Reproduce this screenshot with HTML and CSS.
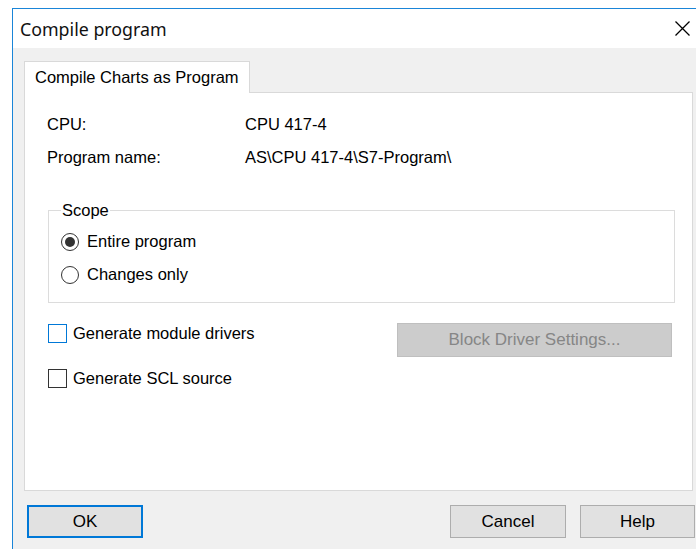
FILE: index.html
```html
<!DOCTYPE html>
<html lang="en">
<head>
<meta charset="utf-8">
<title>Compile program</title>
<link rel="stylesheet" href="styles.css">
</head>
<body>
<div class="window">
  <div class="titlebar">
    <span class="title">Compile program</span>
    <button class="close" aria-label="Close">
      <svg width="15" height="15" viewBox="0 0 15 15"><path d="M0.5 0.5 L14.5 14.5 M14.5 0.5 L0.5 14.5" stroke="#000" stroke-width="1.3" fill="none"/></svg>
    </button>
  </div>
  <div class="client">
    <div class="tabs">
      <div class="tab">Compile Charts as Program</div>
    </div>
    <div class="panel">
      <div class="info">
        <span>CPU:</span><span>CPU 417-4</span>
        <span>Program name:</span><span>AS\CPU 417-4\S7-Program\</span>
      </div>
      <fieldset class="group">
        <legend>Scope</legend>
        <label class="radio-row"><span class="radio checked"></span>Entire program</label>
        <label class="radio-row"><span class="radio"></span>Changes only</label>
      </fieldset>
      <div class="options">
        <div class="checks">
          <label class="check-row"><span class="check focus"></span>Generate module drivers</label>
          <label class="check-row"><span class="check"></span>Generate SCL source</label>
        </div>
        <button class="btn wide" disabled>Block Driver Settings...</button>
      </div>
    </div>
    <div class="footer">
      <button class="btn default">OK</button>
      <div class="footer-right">
        <button class="btn">Cancel</button>
        <button class="btn help">Help</button>
      </div>
    </div>
  </div>
</div>
</body>
</html>
```
FILE: styles.css
```css
* { box-sizing: border-box; }

html, body {
  margin: 0;
  height: 100%;
  background: #ffffff;
  overflow: hidden;
}

body {
  font-family: "Liberation Sans", Arial, sans-serif;
  font-size: 16.5px;
  color: #000;
}

.window {
  margin: 8px 0 0 12px;
  height: calc(100% - 8px);
  border-top: 1px solid #1a85d8;
  border-left: 1px solid #1a85d8;
  background: #f0f0f0;
  display: flex;
  flex-direction: column;
}

/* title bar */
.titlebar {
  height: 39px;
  background: #ffffff;
  display: flex;
  align-items: center;
  justify-content: space-between;
  padding: 0 6px 0 7px;
}

.title {
  font-family: "Noto Sans", "Open Sans", sans-serif;
  font-size: 17.8px;
  color: #111;
}

.close {
  border: 0;
  background: none;
  padding: 0;
  width: 15px;
  height: 15px;
  display: flex;
}

/* dialog area */
.client {
  flex: 1;
  padding: 13px 1px 0 11px;
}

.tabs {
  display: flex;
}

.tab {
  position: relative;
  z-index: 1;
  width: 226px;
  height: 32px;
  margin-bottom: -1px;
  background: #ffffff;
  border: 1px solid #d9d9d9;
  border-bottom: 0;
  padding-left: 10px;
  display: flex;
  align-items: center;
}

.panel {
  height: 399px;
  margin-right: 2px;
  background: #ffffff;
  border: 1px solid #d9d9d9;
  padding-top: 15px;
}

.info {
  display: grid;
  grid-template-columns: 198px auto;
  grid-auto-rows: 33px;
  align-items: center;
  margin-left: 22px;
}

/* scope group */
.group {
  margin: 26px 17px 0 23px;
  border: 1px solid #dcdcdc;
  padding: 5px 0 11px 12px;
  min-width: 0;
}

.group legend {
  padding: 0 1px;
  line-height: 20px;
}

.radio-row {
  height: 33px;
  display: flex;
  align-items: center;
  gap: 8px;
}

.radio {
  width: 18px;
  height: 18px;
  border: 1px solid #333;
  border-radius: 50%;
  display: flex;
  align-items: center;
  justify-content: center;
}

.radio.checked::after {
  content: "";
  width: 10px;
  height: 10px;
  border-radius: 50%;
  background: #333;
}

/* check boxes and driver button */
.options {
  margin: 20px 20px 0 23px;
  display: flex;
  justify-content: space-between;
  align-items: flex-start;
}

.checks {
  display: flex;
  flex-direction: column;
  gap: 25px;
}

.check-row {
  height: 20px;
  display: flex;
  align-items: center;
  gap: 6px;
}

.check {
  width: 19px;
  height: 19px;
  border: 1px solid #333;
  background: #fff;
}

.check.focus {
  border-color: #0078d7;
}

.btn {
  font-family: "Liberation Sans", Arial, sans-serif;
  font-size: 17px;
  color: #000;
  width: 116px;
  height: 33px;
  background: #e1e1e1;
  border: 1px solid #adadad;
  padding: 0;
}

.btn.wide {
  width: 275px;
  height: 34px;
  background: #cccccc;
  border-color: #bfbfbf;
  color: #868686;
}

.btn.default {
  border: 2px solid #0078d7;
}

.btn.help {
  width: 115px;
}

.footer {
  margin-top: 14px;
  padding-left: 3px;
  display: flex;
  justify-content: space-between;
}

.footer-right {
  display: flex;
  gap: 14px;
}
```
